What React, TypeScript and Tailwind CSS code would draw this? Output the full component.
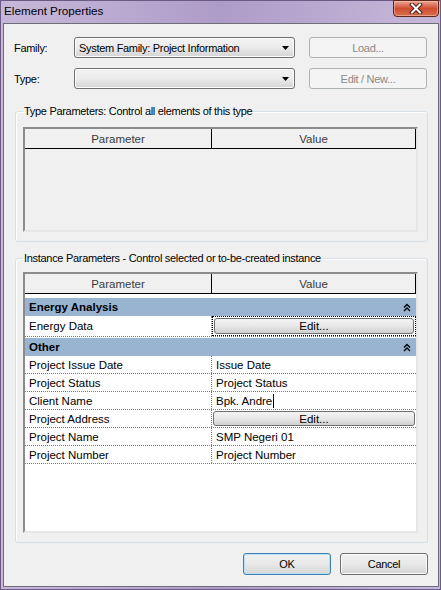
import React from "react";

const narrow = "font-['Liberation_Sans',Arial,sans-serif] text-[11px] tracking-[-0.3px] leading-[14px]";
const tah = "font-['Liberation_Sans',Arial,sans-serif] text-[11.5px] tracking-normal leading-[14px]";

function Arrow() {
  return (
    <svg width="7" height="4" viewBox="0 0 7 4">
      <path d="M0 0H7L3.5 4Z" fill="#000" />
    </svg>
  );
}

function Collapse() {
  return (
    <svg width="8" height="9" viewBox="0 0 8 9" fill="none" stroke="#000" strokeWidth="1.4">
      <path d="M1 4.5L4 1.5L7 4.5" />
      <path d="M1 8L4 5L7 8" />
    </svg>
  );
}

function Combo({ text }: { text: string }) {
  return (
    <div className="w-[221px] h-[21px] rounded-[3px] border border-[#707070] bg-gradient-to-b from-[#f3f3f3] via-[#ebebeb] to-[#d4d4d4] flex items-center justify-between pl-[4px] pr-[5px] shadow-[inset_0_0_0_1px_#fcfcfc]">
      <span className="text-black">{text}</span>
      <Arrow />
    </div>
  );
}

function DisabledBtn({ text }: { text: string }) {
  return (
    <div className="w-[118px] h-[21px] rounded-[3px] border border-[#adb2b5] bg-[#f4f4f4] flex items-center justify-center text-[#8a8a8a]">
      {text}
    </div>
  );
}

function Header() {
  return (
    <div className="h-[20px] shrink-0 flex border-b border-black bg-[#f0f0f0] text-[#3a3a3a]">
      <div className="w-[187px] border-r border-black flex items-center justify-center">Parameter</div>
      <div className="flex-1 border-r border-black flex items-center justify-center">Value</div>
    </div>
  );
}

function GroupRow({ label, className = "" }: { label: string; className?: string }) {
  return (
    <div className={`h-[18px] bg-[#99b4d1] flex items-center justify-between pl-[4px] pr-[5px] ${className}`}>
      <span className="font-bold text-black">{label}</span>
      <Collapse />
    </div>
  );
}

function EditBtn({ h }: { h: string }) {
  return (
    <div className={`${h} w-full rounded-[3px] border border-[#707070] bg-gradient-to-b from-[#f4f4f4] via-[#e8e8e8] to-[#d0d0d0] flex items-center justify-center text-black`}>
      Edit...
    </div>
  );
}

function Row({ label, value, caret }: { label: string; value: string; caret?: boolean }) {
  return (
    <div className="h-[18px] flex border-b border-dotted border-[#7a7a7a]">
      <div className="w-[187px] border-r border-dotted border-[#7a7a7a] pl-[4px] flex items-center">{label}</div>
      <div className="flex-1 pl-[4px] flex items-center">
        {value}
        {caret && <span className="inline-block w-[1px] h-[14px] bg-black ml-[1px]" />}
      </div>
    </div>
  );
}

export default function App() {
  return (
    <div className="w-[441px] h-[590px] flex flex-col border border-[#6c5a86] bg-gradient-to-r from-[#c7b8da] via-[#ae9cc8] to-[#c6b8da]">
      {/* title bar */}
      <div className="h-[22px] shrink-0 flex items-start justify-between pl-[3px] pr-[1px]">
        <span className="pt-[3px] font-['Liberation_Sans',Arial,sans-serif] text-[11.7px] leading-[14px] text-black">
          Element Properties
        </span>
        <div className="w-[46px] h-[17px] -mt-[1px] rounded-b-[4px] border border-[#5e2519] bg-gradient-to-b from-[#e9a493] via-[#cf4b31] to-[#d86f4f] flex items-center justify-center shadow-[inset_0_0_0_1px_rgba(255,210,200,0.45)]">
          <svg width="14" height="11" viewBox="0 0 14 11">
            <path d="M3 1.5L11 9.5M11 1.5L3 9.5" stroke="#4a1c14" strokeWidth="4" strokeLinecap="square" />
            <path d="M3 1.5L11 9.5M11 1.5L3 9.5" stroke="#ffffff" strokeWidth="2" strokeLinecap="square" />
          </svg>
        </div>
      </div>

      {/* client */}
      <div className={`flex-1 ml-[2px] mr-[1px] mb-[2px] border border-[#6e6e7a] bg-[#f0f0f0] flex flex-col ${narrow}`}>
        <div className="pt-[13px] pl-[10px] flex flex-col gap-[10px]">
          <div className="flex items-center">
            <span className="w-[60px] text-black">Family:</span>
            <Combo text="System Family: Project Information" />
            <div className="ml-[14px]">
              <DisabledBtn text="Load..." />
            </div>
          </div>
          <div className="flex items-center">
            <span className="w-[60px] text-black">Type:</span>
            <Combo text="" />
            <div className="ml-[14px]">
              <DisabledBtn text="Edit / New..." />
            </div>
          </div>
        </div>

        {/* Type parameters */}
        <fieldset className="ml-[11px] mt-[15px] w-[413px] rounded-[3px] border border-[#d5dfe5] shadow-[inset_1px_1px_0_#ffffff] pl-[7px] pt-[9px] pb-[9px]">
          <legend className="px-[1px] text-black">Type Parameters: Control all elements of this type</legend>
          <div className={`w-[395px] h-[105px] border-2 border-t-[#8c8c8c] border-l-[#8c8c8c] border-r-[#e6e6e6] border-b-[#e6e6e6] bg-[#f0f0f0] flex flex-col ${tah}`}>
            <Header />
          </div>
        </fieldset>

        {/* Instance parameters */}
        <fieldset className="ml-[11px] mt-[9px] w-[413px] rounded-[3px] border border-[#d5dfe5] shadow-[inset_1px_1px_0_#ffffff] pl-[7px] pt-[7px] pb-[9px]">
          <legend className="px-[1px] text-black">Instance Parameters - Control selected or to-be-created instance</legend>
          <div className={`w-[395px] h-[261px] border-2 border-t-[#8c8c8c] border-l-[#8c8c8c] border-r-[#e6e6e6] border-b-[#e6e6e6] bg-white flex flex-col text-black ${tah}`}>
            <Header />
            <div className="pt-[4px] flex flex-col">
              <GroupRow label="Energy Analysis" />
              <div className="h-[21px] flex border-b border-dotted border-[#7a7a7a]">
                <div className="w-[187px] border-r border-dotted border-[#7a7a7a] pl-[4px] flex items-center">Energy Data</div>
                <div className="flex-1 border border-dotted border-black p-[1px] flex">
                  <EditBtn h="h-full" />
                </div>
              </div>
              <GroupRow label="Other" className="mt-[1px]" />
              <Row label="Project Issue Date" value="Issue Date" />
              <Row label="Project Status" value="Project Status" />
              <Row label="Client Name" value="Bpk. Andre" caret />
              <div className="h-[18px] flex border-b border-dotted border-[#7a7a7a]">
                <div className="w-[187px] border-r border-dotted border-[#7a7a7a] pl-[4px] flex items-center">Project Address</div>
                <div className="flex-1 px-[1px] py-[1px] flex">
                  <EditBtn h="h-full" />
                </div>
              </div>
              <Row label="Project Name" value="SMP Negeri 01" />
              <Row label="Project Number" value="Project Number" />
            </div>
          </div>
        </fieldset>

        {/* dialog buttons */}
        <div className="mt-[10px] pr-[10px] flex justify-end gap-[9px]">
          <div className="w-[88px] h-[22px] rounded-[3px] border border-[#3c7fb1] bg-gradient-to-b from-[#f2f2f2] via-[#e8e8e8] to-[#d6d6d6] shadow-[inset_0_0_0_1px_#b9e2f8] flex items-center justify-center text-black">
            OK
          </div>
          <div className="w-[88px] h-[22px] rounded-[3px] border border-[#707070] bg-gradient-to-b from-[#f2f2f2] via-[#e8e8e8] to-[#d6d6d6] shadow-[inset_0_0_0_1px_#fcfcfc] flex items-center justify-center text-black">
            Cancel
          </div>
        </div>
      </div>
    </div>
  );
}
